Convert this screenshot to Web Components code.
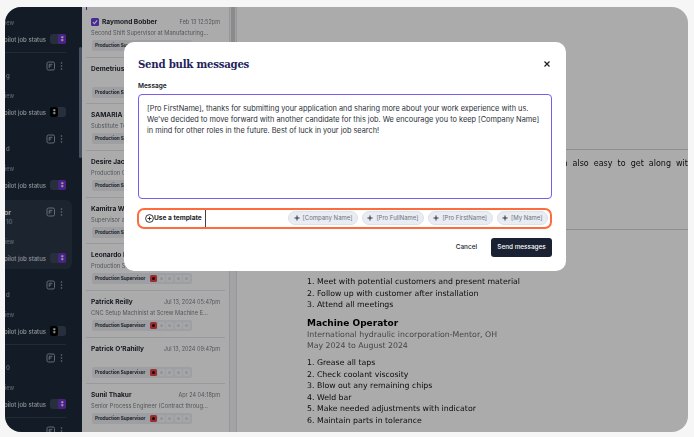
<!DOCTYPE html>
<html><head><meta charset="utf-8"><style>
html,body{margin:0;height:100%;background:#f6f6f6;overflow:hidden}
</style></head><body>
<x-app>
  <x-sidebar slot="side">
    <x-side-item first state="on" sub="" ></x-side-item>
    <x-side-item state="off" sub="g"></x-side-item>
    <x-side-item state="on" sub="d" noline></x-side-item>
    <x-side-item active state="on" name="Production Supervisor" sub="10" noline></x-side-item>
    <x-side-item state="off" sub="d" noline></x-side-item>
    <x-side-item state="on" sub="0"></x-side-item>
    <x-side-item state="off" sub="d"></x-side-item>
  </x-sidebar>
  <x-list slot="list">
    <x-cand first check name="Raymond Bobber" date="Feb 13 12:52pm" sub="Second Shift Supervisor at Manufacturing..."></x-cand>
    <x-cand name="Demetrius Ward" date="Feb 12 09:14am" sub=""></x-cand>
    <x-cand name="SAMARIA Young" date="Feb 11 04:02pm" sub="Substitute Teacher at Lakeland Schools..."></x-cand>
    <x-cand name="Desire Jackson" date="Feb 09 10:20am" sub="Production Coordinator at Tower Press..."></x-cand>
    <x-cand name="Kamitra Wells" date="Feb 02 03:33pm" sub="Supervisor at Parker Hannifin Plant..."></x-cand>
    <x-cand name="Leonardo Ruiz" date="Jan 28 11:41am" sub="Production Supervisor at Swagelok..."></x-cand>
    <x-cand name="Patrick Reilly" date="Jul 13, 2024 05:47pm" sub="CNC Setup Machinist at Screw Machine E..."></x-cand>
    <x-cand name="Patrick O’Rahilly" date="Jul 13, 2024 09:47pm" sub=""></x-cand>
    <x-cand name="Sunil Thakur" date="Apr 24 04:18pm" sub="Senior Process Engineer (Contract throug..."></x-cand>
  </x-list>
  <x-resume slot="main"></x-resume>
  <x-modal slot="modal">
    <x-chip>[Company Name]</x-chip>
    <x-chip>[Pro FullName]</x-chip>
    <x-chip>[Pro FirstName]</x-chip>
    <x-chip>[My Name]</x-chip>
  </x-modal>
</x-app>
<script>
const INTER='Inter,"Liberation Sans",sans-serif';
function def(name,html,init){
  customElements.define(name,class extends HTMLElement{
    connectedCallback(){
      if(this.shadowRoot)return;
      const a=n=>this.getAttribute(n)||'';
      const r=this.attachShadow({mode:'open'});
      r.innerHTML=typeof html==='function'?html(a,this):html;
    }
  });
}
def('x-app',`<style>
:host{display:block;box-sizing:border-box;width:694px;height:437px;padding:7px 6px 5px 5px;filter:blur(.35px)}
.win{position:relative;height:100%;border-radius:16px;overflow:hidden;background:#fff;display:grid;grid-template-columns:77px 147px 8px 1fr}
.track{background:#f3f4f6;border-left:1px solid #dfe1e5;border-right:1px solid #dfe1e5;box-sizing:border-box;padding:0 1px}
.thumb{height:148px;background:#cfd0d2;border-radius:0 0 3px 3px}
.shade{position:absolute;inset:0;background:rgba(0,0,0,.33)}
</style><div class="win"><slot name="side"></slot><slot name="list"></slot><div class="track"><div class="thumb"></div></div><slot name="main"></slot><div class="shade"></div><slot name="modal"></slot></div>`);
def('x-sidebar',`<style>
:host{display:block;position:relative;background:#1d2939;overflow:hidden}
.in{margin-top:-28px}
.bar{position:absolute;right:0;top:40px;width:3px;height:111px;background:#6a7891;border-radius:2px}
</style><div class="in"><slot></slot></div><div class="bar"></div>`);
def('x-side-item',(a,t)=>{
 const on=a('state')==='on',act=t.hasAttribute('active'),line=!t.hasAttribute('noline');
 return `<style>
:host{display:block;position:relative;height:73px;width:67px;font:500 6px/9px ${INTER};color:#b5bcc8}
.bg{position:absolute;inset:2px 0;background:#2a3646;border-radius:0 6px 6px 0}
.in{position:relative;box-sizing:border-box;height:73px;width:61px;padding-top:8px;${line?'border-top:1px solid #354052;':'padding-top:9px;'}}
.row{display:flex;align-items:center;height:10px}
.clip{flex:1;min-width:0;overflow:hidden;display:flex;justify-content:flex-end;white-space:nowrap}
.name{font-weight:600;font-size:7px;color:#fff}
svg{flex:none}
.sub{height:9px;overflow:hidden;font-size:6px;padding-left:1px;color:#a0a8b5}
.pv{margin-top:12px;height:9px;width:9px;overflow:hidden;display:flex;justify-content:flex-end;white-space:nowrap;font-size:5.5px;color:#8f98a6}
.st{margin-top:6px;gap:4px}
.st .clip{font-size:6px;color:#d5d9e0}
.tg{flex:none;width:16px;height:10px;border-radius:3px;background:#3b475a;display:flex;justify-content:${on?'flex-end':'flex-start'}}
.tg b{width:8px;height:10px;border-radius:2px;background:${on?'#6d32c9':'#000'};color:#fff;font:700 6px/10px ${INTER};text-align:center}
</style>${act?'<div class="bg"></div>':''}<div class="in">
<div class="row"><div class="clip" style="margin-right:2px"><span class="name" style="margin-right:${act?'33px':'0'}">${a('name')}</span></div>
<svg width="10" height="10" viewBox="0 0 10 10" fill="none" stroke="#a4acb9" stroke-width=".9"><rect x="1" y="1" width="7.5" height="8" rx="1.5"/><path d="M3.2 3.3h3.2M3.2 5h2.2M3.2 3.3v3.6"/></svg>
<svg width="9" height="10" viewBox="0 0 9 10" fill="#a4acb9" style="margin-left:1px"><circle cx="4.5" cy="2" r=".8"/><circle cx="4.5" cy="5" r=".8"/><circle cx="4.5" cy="8" r=".8"/></svg></div>
<div class="sub">${a('sub')}</div>
<div class="pv"><span>Preview</span></div>
<div class="row st"><div class="clip"><span>Copilot job status</span></div><div class="tg"><b>⁑</b></div></div>
</div>`});
def('x-list',`<style>
:host{display:block;background:#fff;overflow:hidden;position:relative}
.tick{position:absolute;left:4px;top:0;width:1px;height:3px;background:#5b2fc9}
.in{padding-top:3px}
</style><div class="tick"></div><div class="in"><slot></slot></div>`);
def('x-cand',(a,t)=>{
 const first=t.hasAttribute('first'),chk=t.hasAttribute('check');
 return `<style>
:host{display:block;box-sizing:border-box;height:46.67px;margin:0 4px;padding:${first?'7px':'6px'} 5px 0;${first?'':'border-top:1px solid #e3e5e9;'}font-family:${INTER};color:#1f2430}
.top{display:flex;align-items:center;height:10px;gap:3px}
.cb{flex:none;width:8px;height:8px;background:#6a3fe0;border-radius:1.5px;display:flex}
.nm{font:700 6.6px/10px ${INTER};white-space:nowrap;flex:1;overflow:hidden}
.dt{font:400 5.5px/10px ${INTER};color:#7c818a;white-space:nowrap}
.sb{font:400 5.7px/11px ${INTER};color:#7d828c;height:11px;white-space:nowrap;overflow:hidden}
.tag{display:inline-flex;align-items:center;height:11px;margin-top:2px;margin-left:1px;padding:0 2px 0 3px;background:#eceef2;border-radius:2px;font:700 4.6px/11px ${INTER};color:#2a2f3a;gap:1.3px;vertical-align:top}
.tag span{margin-right:3px}
i{width:7px;height:7px;border-radius:1.5px;background:#f7f8fa;display:flex;align-items:center;justify-content:center}
i::after{content:"";width:3px;height:3px;background:#d9dce2;border-radius:50%}
i.r{background:#e2474b}
i.r::after{background:#300}
</style><div class="top">${chk?'<div class="cb"><svg width="8" height="8" viewBox="0 0 8 8" fill="none" stroke="#fff" stroke-width="1.1"><path d="M1.8 4.2 3.4 5.7 6.2 2.4"/></svg></div>':''}<div class="nm">${a('name')}</div><div class="dt">${a('date')}</div></div>
<div class="sb">${a('sub')}</div>
<div class="tag"><span>Production Supervisor</span><i class="r"></i><i></i><i></i><i></i><i></i></div>`});
def('x-resume',`<style>
:host{display:block;font:400 7.8px/11.6px "DejaVu Sans",sans-serif;color:#111;background:#fff;overflow:hidden}
.a{box-sizing:border-box;height:143px;border-bottom:1px solid #d4d6da}
.b{box-sizing:border-box;height:80px;border-bottom:1px solid #d4d6da;padding-top:8px;display:flex;justify-content:flex-end;white-space:nowrap;overflow:hidden;word-spacing:2.5px;font-size:8px;line-height:12px}
.b span{margin-right:-5px}
.c{padding:46px 0 0 70px}
ol{margin:0;padding:0;list-style:none}
h4{margin:6px 0 0;font:700 9px/12px "DejaVu Sans",sans-serif;color:#000}
p{margin:0;color:#6a6a6a}
.g{margin-bottom:5px}
</style><div class="a"></div><div class="b"><span>He is a hard working person also easy to get along with</span></div>
<div class="c"><ol><li>1. Meet with potential customers and present material</li><li>2. Follow up with customer after installation</li><li>3. Attend all meetings</li></ol>
<h4>Machine Operator</h4><div class="g"><p>International hydraulic incorporation-Mentor, OH</p><p>May 2024 to August 2024</p></div>
<ol><li>1. Grease all taps</li><li>2. Check coolant viscosity</li><li>3. Blow out any remaining chips</li><li>4. Weld bar</li><li>5. Make needed adjustments with indicator</li><li>6. Maintain parts in tolerance</li></ol></div>`);
def('x-chip',`<style>
:host{display:inline-flex;align-items:center;height:14px;padding:0 4.5px;gap:3px;background:#e9ecf2;border:1px solid #dde1e8;border-radius:7px;box-sizing:border-box;font:400 6px/14px ${INTER};color:#6b7280;white-space:nowrap}
svg{flex:none}
</style><svg width="6" height="6" viewBox="0 0 6 6" stroke="#2b3240" stroke-width="1" fill="none"><path d="M3 .5v5M.5 3h5"/></svg><slot></slot>`);
def('x-modal',`<style>
:host{position:absolute;left:119px;top:35px;width:442px;height:229px;box-sizing:border-box;background:#fff;border-radius:10px;padding:15px 14px 0;font-family:${INTER};color:#14181f}
.hd{display:flex;justify-content:space-between;align-items:center;height:14px}
h2{margin:0;font:700 10.2px/14px "DejaVu Serif",serif;letter-spacing:-.25px;color:#241f5c}
.lb{margin-top:10px;font:600 6.5px/10px ${INTER}}
.ta{box-sizing:border-box;margin-top:3px;height:105px;border:1.5px solid #7a5ce8;border-radius:4px;padding:7.5px 8px;font:400 7.37px/11.2px ${INTER};color:#2b2f38;white-space:nowrap}
.bar{box-sizing:border-box;margin:8.5px 0 0 -1px;height:21px;width:415px;border:2px solid #ff6b3d;border-radius:7px;display:flex;align-items:center;justify-content:space-between;padding-right:2px}
.tpl{display:flex;align-items:center;height:17px;width:67px;box-sizing:border-box;padding-left:6px;border-right:1px solid #444;font:700 6.6px/17px ${INTER};color:#1b1f27;white-space:nowrap}
.chips{display:flex;gap:4px}
.ft{display:flex;justify-content:flex-end;align-items:center;margin-top:9px;gap:14px}
.cancel{font:500 6.4px/19px ${INTER};color:#14181f}
.send{width:61px;height:19px;background:#1a2132;border-radius:3px;color:#fff;font:500 6.4px/19px ${INTER};text-align:center}
</style>
<div class="hd"><h2>Send bulk messages</h2><svg width="8" height="8" viewBox="0 0 8 8" stroke="#1c1f26" stroke-width="1.2" fill="none" style="margin-right:1px"><path d="M1.5 1.5l5 5M6.5 1.5l-5 5"/></svg></div>
<div class="lb">Message</div>
<div class="ta">[Pro FirstName], thanks for submitting your application and sharing more about your work experience with us.<br>We've decided to move forward with another candidate for this job. We encourage you to keep [Company Name]<br>in mind for other roles in the future. Best of luck in your job search!</div>
<div class="bar"><div class="tpl"><svg width="9" height="9" viewBox="0 0 9 9" fill="none" stroke="#1b1f27" stroke-width=".9" style="flex:none"><circle cx="4.5" cy="4.5" r="3.9"/><path d="M4.5 2.6v3.8M2.6 4.5h3.8"/></svg><span>Use a template</span></div><div class="chips"><slot></slot></div></div>
<div class="ft"><div class="cancel">Cancel</div><div class="send">Send messages</div></div>`);
</script>
</body></html>
